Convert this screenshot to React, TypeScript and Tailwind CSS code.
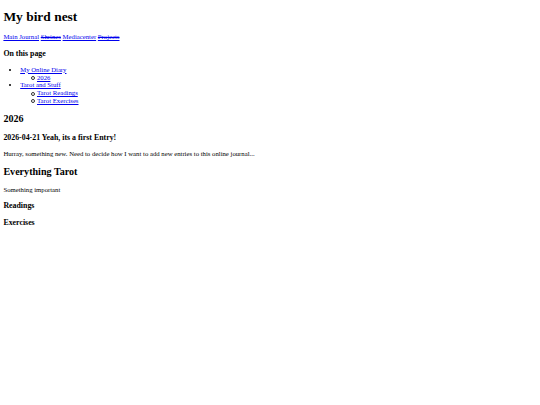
const serif = "font-['Liberation_Serif','Times_New_Roman',serif]";
const link = 'text-[#0000ee] underline';
const struck = 'text-[#0000ee] [text-decoration-line:underline_line-through]';
// hollow circle bullet for the nested entries
const sub =
  "before:content-[''] before:inline-block before:align-middle before:w-[4px] before:h-[4px] before:rounded-full before:border before:border-[#333] before:-ml-[6px] before:mr-[2px]";

function Nav() {
  return (
    <div>
      <a href="#" className={link}>Main Journal</a>{' '}
      <a href="#" className={struck}>Shrines</a>{' '}
      <a href="#" className={link}>Mediacenter</a>{' '}
      <a href="#" className={struck}>Projects</a>
    </div>
  );
}

function Toc() {
  return (
    <ul className="my-[1em] list-disc pl-[16.8px]">
      <li>
        <a href="#diary" className={link}>My Online Diary</a>
        <ul className="list-none pl-[16.8px]">
          <li className={sub}><a href="#y2026" className={link}>2026</a></li>
        </ul>
      </li>
      <li>
        <a href="#tarot" className={link}>Tarot and Stuff</a>
        <ul className="list-none pl-[16.8px]">
          <li className={sub}><a href="#readings" className={link}>Tarot Readings</a></li>
          <li className={sub}><a href="#exercises" className={link}>Tarot Exercises</a></li>
        </ul>
      </li>
    </ul>
  );
}

export default function App() {
  return (
    <div className={`${serif} m-[3.4px] bg-white text-[6.72px] leading-[1.15] text-black`}>
      <h1 className="my-[0.67em] text-[13.44px] font-bold">My bird nest</h1>
      <Nav />
      <h3 className="my-[1em] text-[7.86px] font-bold">On this page</h3>
      <Toc />
      <h2 id="y2026" className="my-[0.83em] text-[10.08px] font-bold">2026</h2>
      <h3 className="my-[1em] text-[7.86px] font-bold">2026-04-21 Yeah, its a first Entry!</h3>
      <p className="my-[1em]">Hurray, something new. Need to decide how I want to add new entries to this online journal...</p>
      <h2 id="tarot" className="my-[0.83em] text-[10.08px] font-bold">Everything Tarot</h2>
      <p className="my-[1em]">Something important</p>
      <h3 id="readings" className="my-[1em] text-[7.86px] font-bold">Readings</h3>
      <h3 id="exercises" className="my-[1em] text-[7.86px] font-bold">Exercises</h3>
    </div>
  );
}
